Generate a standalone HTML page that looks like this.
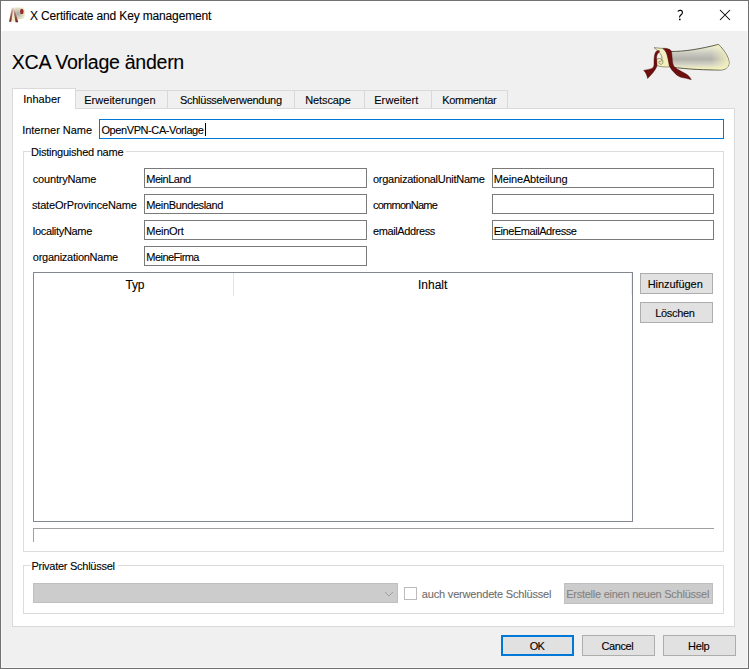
<!DOCTYPE html>
<html><head><meta charset="utf-8">
<style>
html,body{margin:0;padding:0;}
body{width:749px;height:669px;position:relative;overflow:hidden;background:#f0f0f0;font-family:"Liberation Sans",sans-serif;}
.a{position:absolute;box-sizing:border-box;}
.t{position:absolute;white-space:pre;color:#000;-webkit-text-stroke:0.1px currentColor;}
.edit{position:absolute;box-sizing:border-box;background:#fff;border:1px solid #7a7a7a;height:20px;}
.btn{position:absolute;box-sizing:border-box;background:#e1e1e1;border:1px solid #adadad;height:21px;}
svg{position:absolute;overflow:visible;}
</style></head><body>
<!-- window frame -->
<div class="a" style="left:0;top:0;width:749px;height:669px;border:1px solid #717171;"></div>
<div class="a" style="left:1px;top:1px;width:747px;height:30px;background:#fff;"></div>
<div class="a" style="left:1px;top:31px;width:1px;height:637px;background:#f6f6f6;"></div>
<div class="a" style="left:747px;top:31px;width:1px;height:637px;background:#f6f6f6;"></div>
<div class="a" style="left:1px;top:667px;width:747px;height:1px;background:#f6f6f6;"></div>

<!-- title icon -->
<svg style="left:6px;top:5px;" width="22" height="20" viewBox="0 0 22 20">
<defs>
<linearGradient id="rs" x1="0" y1="0" x2="0" y2="1">
<stop offset="0" stop-color="#eadcd4"/>
<stop offset="0.4" stop-color="#a8706a"/>
<stop offset="1" stop-color="#6c1a1a"/>
</linearGradient>
<radialGradient id="cr" cx="0.45" cy="0.5" r="0.6">
<stop offset="0" stop-color="#a8aaa4"/>
<stop offset="0.5" stop-color="#d0d0bc"/>
<stop offset="1" stop-color="#f2f0d0"/>
</radialGradient>
</defs>
<path d="M6.5,2.8 C10,2.4 14,2.3 17.8,2.8 C19,4.5 19.2,8.5 18.8,11.5 C18.2,13.6 16,14.2 13.5,14.2 L9.5,14.8 Z" fill="url(#cr)"/>
<path d="M6.2,4 L8.2,4 L10.4,16.5 L5.0,16.5 Z" fill="#ede4b0" opacity="0.75"/>
<ellipse cx="15.8" cy="6.4" rx="1.8" ry="2.7" fill="#9e2828"/>
<path d="M3.1,16.8 L5.9,2.6 L7.5,2.6 L5.2,16.8 Z" fill="url(#rs)"/>
<path d="M7,3.4 L8.5,3.4 L12.2,17.3 L9.6,17.3 Z" fill="url(#rs)"/>
</svg>

<!-- title buttons -->
<svg style="left:672px;top:6px;" width="16" height="18" viewBox="0 0 16 18"><path d="M5.8,5.6 C6.4,4.4 7.8,4.2 8.8,4.4 C10.4,4.8 10.8,6.3 10.1,7.6 C9.4,8.7 7.6,9.5 7.6,11 L7.6,11.4" stroke="#000" stroke-width="1.15" fill="none"/><circle cx="7.8" cy="13.4" r="0.85" fill="#000"/></svg>
<svg style="left:720px;top:10px;" width="10" height="10" viewBox="0 0 10 10"><path d="M0 0L10 10M10 0L0 10" stroke="#000" stroke-width="1.05"/></svg>

<!-- scroll logo -->
<svg style="left:640px;top:40px;" width="95" height="45" viewBox="0 0 95 45">
<defs>
<linearGradient id="pg" x1="0" y1="0" x2="0" y2="1">
<stop offset="0" stop-color="#f6f4bc"/>
<stop offset="0.14" stop-color="#e6e6d2"/>
<stop offset="0.38" stop-color="#c6c6be"/>
<stop offset="0.58" stop-color="#b2b2aa"/>
<stop offset="0.78" stop-color="#d2d2c6"/>
<stop offset="0.92" stop-color="#eeecbe"/>
<stop offset="1" stop-color="#f4f2b6"/>
</linearGradient>
<linearGradient id="pg2" x1="0" y1="0" x2="1" y2="0">
<stop offset="0" stop-color="#f6f4c0" stop-opacity="0"/>
<stop offset="0.7" stop-color="#f6f4c0" stop-opacity="0"/>
<stop offset="1" stop-color="#f6f4c0" stop-opacity="0.9"/>
</linearGradient>
</defs>
<path d="M30,11.5 C45,11.6 60,9 78.6,4.4 C84,10 89,17 89,23 C88.5,28 85,30 80,30 C66,30 50,29.5 30,27 Z" fill="url(#pg)" stroke="#4a4a38" stroke-width="0.9"/>
<path d="M30,11.5 C45,11.6 60,9 78.6,4.4 C84,10 89,17 89,23 C88.5,28 85,30 80,30 C66,30 50,29.5 30,27 Z" fill="url(#pg2)"/>
<path d="M14,7.6 C17,8 20,8.2 22.4,8.4 C25,10 27.5,13 28.4,19.6 L29.6,26.8 C26,27.2 20,27 17,25.5 C15,23.5 15.5,19.5 18,18.6 C20.5,17.8 23,19.5 23,22 C23,24.5 20,25 19,23 C18.3,21.5 19.8,20.5 20.8,21.5 C24,18 21,13 14,7.6 Z" fill="#f3efbf" stroke="#5a5a3a" stroke-width="0.6"/>
<path d="M16.4,11.2 C17.5,10.6 18.5,10.3 19.2,10.4 L19.4,12 C17.2,13.5 16.6,16 16.6,18 C16.9,22 17.2,25 16.8,26.5 C15.5,30 12,34 7.6,38.5 C7,35 5.5,32 3.6,30.4 C7,29.5 10.5,29 12,28.4 C13.6,27 14,26 14,24 C14,21 14,18 14.4,16 C14.8,13.5 15.5,12 16.4,11.2 Z" fill="#6e0e0e" stroke="#420808" stroke-width="0.4"/>
<path d="M22.8,8.25 C25,8.1 28,8.6 30,9.6 C31,10.5 31.6,11.5 31.6,12.4 C32,16 32.3,19 32.5,22 C33,25 34,26.5 35.3,27.6 C38,30 42,31.5 44.9,33.3 C48,35 50,37 51.3,39.7 C48,38.6 44,37.9 40.9,37.3 C37.8,36.2 35.1,33.8 33.2,31.4 C31.4,29.6 30.2,27.8 29.4,25.4 C28.5,21 27.8,17 26.8,14 C26,11.5 25,10 22.8,8.25 Z" fill="#6e0e0e" stroke="#420808" stroke-width="0.4"/>
</svg>

<!-- tabs -->
<div class="a" style="left:12px;top:108px;width:723px;height:519px;background:#fff;border:1px solid #d9d9d9;"></div>
<div class="a" style="left:75px;top:90px;width:433px;height:19px;background:#f0f0f0;border:1px solid #d9d9d9;"></div>
<div class="a" style="left:167px;top:90px;width:1px;height:18px;background:#d9d9d9;"></div>
<div class="a" style="left:294px;top:90px;width:1px;height:18px;background:#d9d9d9;"></div>
<div class="a" style="left:364px;top:90px;width:1px;height:18px;background:#d9d9d9;"></div>
<div class="a" style="left:431px;top:90px;width:1px;height:18px;background:#d9d9d9;"></div>
<div class="a" style="left:12px;top:88px;width:64px;height:21px;background:#fff;border:1px solid #d9d9d9;border-bottom:none;"></div>

<!-- internal name -->
<div class="edit" style="left:99px;top:119px;width:625px;border-color:#0078d7;"></div>
<div class="a" style="left:205px;top:123px;width:1px;height:13px;background:#000;"></div>

<!-- groupbox DN -->
<div class="a" style="left:23px;top:151px;width:701px;height:401px;border:1px solid #dcdcdc;"></div>
<div class="a" style="left:31px;top:145px;width:95px;height:12px;background:#fff;"></div>

<div class="edit" style="left:144px;top:168px;width:223px;"></div>
<div class="edit" style="left:144px;top:194px;width:223px;"></div>
<div class="edit" style="left:144px;top:220px;width:223px;"></div>
<div class="edit" style="left:144px;top:246px;width:223px;"></div>
<div class="edit" style="left:492px;top:168px;width:222px;"></div>
<div class="edit" style="left:492px;top:194px;width:222px;"></div>
<div class="edit" style="left:492px;top:220px;width:222px;"></div>

<!-- table -->
<div class="a" style="left:33px;top:272px;width:600px;height:250px;border:1px solid #828790;background:#fff;"></div>
<div class="a" style="left:233px;top:273px;width:1px;height:23px;background:#e5e5e5;"></div>
<div class="a" style="left:631px;top:273px;width:1px;height:22px;background:#f0f0f0;"></div>

<div class="btn" style="left:640px;top:273px;width:73px;"></div>
<div class="btn" style="left:640px;top:302px;width:73px;"></div>

<!-- hidden lineedit -->
<div class="a" style="left:33px;top:528px;width:681px;height:1px;background:#a0a0a0;"></div>
<div class="a" style="left:33px;top:528px;width:1px;height:14px;background:#a0a0a0;"></div>

<!-- groupbox private key -->
<div class="a" style="left:23px;top:565px;width:701px;height:49px;border:1px solid #dcdcdc;"></div>
<div class="a" style="left:31px;top:559px;width:87px;height:12px;background:#fff;"></div>
<div class="a" style="left:33px;top:583px;width:365px;height:20px;background:#cccccc;border:1px solid #bfbfbf;"></div>
<svg style="left:384px;top:591px;" width="10" height="7" viewBox="0 0 10 7"><path d="M1 1L5 5L9 1" stroke="#a0a0a0" fill="none" stroke-width="1"/></svg>
<div class="a" style="left:404px;top:587px;width:13px;height:13px;background:#fff;border:1px solid #bcbcbc;"></div>
<div class="a" style="left:564px;top:583px;width:149px;height:21px;background:#cccccc;border:1px solid #bfbfbf;"></div>

<!-- bottom buttons -->
<div class="btn" style="left:501px;top:635px;width:73px;border:2px solid #0078d7;"></div>
<div class="btn" style="left:582px;top:635px;width:73px;"></div>
<div class="btn" style="left:663px;top:635px;width:73px;"></div>
<span class="t" style="left:30.00px;top:9px;font-size:12px;line-height:14px;letter-spacing:-0.152px;color:#000">X Certificate and Key management</span>
<span class="t" style="left:11.80px;top:51px;font-size:19.6px;line-height:22px;letter-spacing:-0.300px;color:#000">XCA Vorlage ändern</span>
<span class="t" style="left:23.20px;top:93px;font-size:11px;line-height:13px;letter-spacing:0.033px;color:#000">Inhaber</span>
<span class="t" style="left:84.20px;top:94px;font-size:11px;line-height:13px;letter-spacing:0.033px;color:#000">Erweiterungen</span>
<span class="t" style="left:180.00px;top:94px;font-size:11px;line-height:13px;letter-spacing:-0.278px;color:#000">Schlüsselverwendung</span>
<span class="t" style="left:305.20px;top:94px;font-size:11px;line-height:13px;letter-spacing:-0.100px;color:#000">Netscape</span>
<span class="t" style="left:374.20px;top:94px;font-size:11px;line-height:13px;letter-spacing:0.100px;color:#000">Erweitert</span>
<span class="t" style="left:442.20px;top:94px;font-size:11px;line-height:13px;letter-spacing:-0.300px;color:#000">Kommentar</span>
<span class="t" style="left:22.20px;top:124px;font-size:11px;line-height:13px;letter-spacing:-0.033px;color:#000">Interner Name</span>
<span class="t" style="left:101.48px;top:124px;font-size:11px;line-height:13px;letter-spacing:-0.411px;color:#000">OpenVPN-CA-Vorlage</span>
<span class="t" style="left:31.00px;top:146px;font-size:11px;line-height:13px;letter-spacing:-0.241px;color:#000">Distinguished name</span>
<span class="t" style="left:32.80px;top:173px;font-size:11px;line-height:13px;letter-spacing:-0.180px;color:#000">countryName</span>
<span class="t" style="left:32.00px;top:199px;font-size:11px;line-height:13px;letter-spacing:-0.189px;color:#000">stateOrProvinceName</span>
<span class="t" style="left:32.80px;top:225px;font-size:11px;line-height:13px;letter-spacing:-0.318px;color:#000">localityName</span>
<span class="t" style="left:32.80px;top:251px;font-size:11px;line-height:13px;letter-spacing:-0.260px;color:#000">organizationName</span>
<span class="t" style="left:146.32px;top:173px;font-size:11px;line-height:13px;letter-spacing:-0.489px;color:#000">MeinLand</span>
<span class="t" style="left:146.32px;top:199px;font-size:11px;line-height:13px;letter-spacing:-0.371px;color:#000">MeinBundesland</span>
<span class="t" style="left:146.32px;top:225px;font-size:11px;line-height:13px;letter-spacing:-0.287px;color:#000">MeinOrt</span>
<span class="t" style="left:146.32px;top:251px;font-size:11px;line-height:13px;letter-spacing:-0.544px;color:#000">MeineFirma</span>
<span class="t" style="left:372.96px;top:173px;font-size:11px;line-height:13px;letter-spacing:-0.260px;color:#000">organizationalUnitName</span>
<span class="t" style="left:372.96px;top:199px;font-size:11px;line-height:13px;letter-spacing:-0.740px;color:#000">commonName</span>
<span class="t" style="left:372.96px;top:225px;font-size:11px;line-height:13px;letter-spacing:-0.391px;color:#000">emailAddress</span>
<span class="t" style="left:493.68px;top:173px;font-size:11px;line-height:13px;letter-spacing:-0.149px;color:#000">MeineAbteilung</span>
<span class="t" style="left:493.68px;top:225px;font-size:11px;line-height:13px;letter-spacing:-0.441px;color:#000">EineEmailAdresse</span>
<span class="t" style="left:125.60px;top:278px;font-size:12px;line-height:14px;letter-spacing:-0.300px;color:#000">Typ</span>
<span class="t" style="left:418.04px;top:278px;font-size:12px;line-height:14px;letter-spacing:-0.024px;color:#000">Inhalt</span>
<span class="t" style="left:647.68px;top:278px;font-size:11px;line-height:13px;letter-spacing:-0.064px;color:#000">Hinzufügen</span>
<span class="t" style="left:655.36px;top:307px;font-size:11px;line-height:13px;letter-spacing:-0.367px;color:#000">Löschen</span>
<span class="t" style="left:31.48px;top:560px;font-size:11px;line-height:13px;letter-spacing:-0.269px;color:#000">Privater Schlüssel</span>
<span class="t" style="left:421.84px;top:588px;font-size:11px;line-height:13px;letter-spacing:-0.180px;color:#6d6d6d">auch verwendete Schlüssel</span>
<span class="t" style="left:566.16px;top:588px;font-size:11px;line-height:13px;letter-spacing:-0.249px;color:#838383">Erstelle einen neuen Schlüssel</span>
<span class="t" style="left:529.68px;top:640px;font-size:11px;line-height:13px;letter-spacing:-0.800px;color:#000">OK</span>
<span class="t" style="left:601.48px;top:640px;font-size:11px;line-height:13px;letter-spacing:-0.420px;color:#000">Cancel</span>
<span class="t" style="left:688.00px;top:640px;font-size:11px;line-height:13px;letter-spacing:-0.313px;color:#000">Help</span>
</body></html>
